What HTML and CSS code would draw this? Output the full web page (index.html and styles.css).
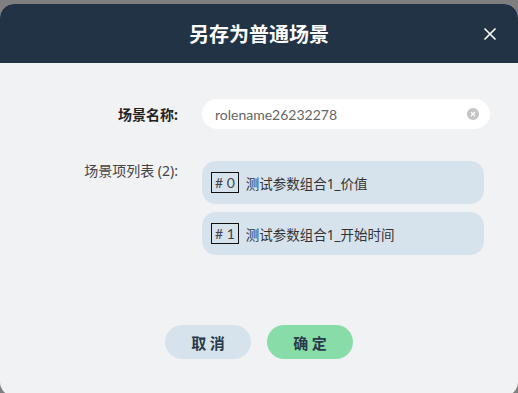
FILE: index.html
```html
<!DOCTYPE html>
<html lang="zh-CN">
<head>
  <meta charset="UTF-8" />
  <title>另存为普通场景</title>
  <link rel="stylesheet" href="styles.css">
</head>
<body>
<div class="dialog">
  <header class="dialog-head">
    <h2>另存为普通场景</h2>
    <button class="close-btn" aria-label="关闭">
      <svg width="14" height="14" viewBox="0 0 14 14"><path d="M1.5 1.5L12.5 12.5M12.5 1.5L1.5 12.5" stroke="#fff" stroke-width="1.6" fill="none"/></svg>
    </button>
  </header>

  <main class="dialog-body">
    <div class="form-row">
      <label class="form-label strong">场景名称:</label>
      <div class="input-wrap">
        <input type="text" value="rolename26232278">
        <span class="clear-icon">
          <svg width="12" height="12" viewBox="0 0 12 12"><circle cx="6" cy="6" r="6" fill="#c4c4c4"/><path d="M4 4L8 8M8 4L4 8" stroke="#fff" stroke-width="1.3"/></svg>
        </span>
      </div>
    </div>

    <div class="form-row list-row">
      <label class="form-label">场景项列表 (2):</label>
      <div class="item-list">
        <div class="item"><span class="idx"># 0</span>测试参数组合1_价值</div>
        <div class="item"><span class="idx"># 1</span>测试参数组合1_开始时间</div>
      </div>
    </div>
  </main>

  <footer class="dialog-foot">
    <button class="btn btn-cancel">取 消</button>
    <button class="btn btn-ok">确 定</button>
  </footer>
</div>
</body>
</html>
```

FILE: styles.css
```css
:root {
  --navy: #213345;
  --panel: #f1f2f4;
  --pale-blue: #d6e3ed;
  --green: #88dca8;
}
body {
  margin: 0;
  background: #7f7f7f;
  font-family: "Noto Sans", "Noto Sans CJK SC", sans-serif;
  height: 393px;
  overflow: hidden;
}
.dialog {
  margin-top: 4px;
  height: 392px;
  background: var(--panel);
  border-radius: 14px;
  overflow: hidden;
  display: flex;
  flex-direction: column;
}
.dialog-head {
  height: 59px;
  flex-shrink: 0;
  background: var(--navy);
  display: flex;
  align-items: center;
  justify-content: center;
  position: relative;
}
.dialog-head h2 {
  margin: 0;
  color: #fff;
  font-size: 20px;
  font-weight: 700;
}
.close-btn {
  position: absolute;
  right: 21px;
  top: 23px;
  background: none;
  border: none;
  padding: 0;
  width: 14px;
  height: 14px;
  display: flex;
}
.dialog-body {
  padding: 36px 28px 0 0;
  flex-grow: 1;
}
.form-row {
  display: flex;
  gap: 24px;
  align-items: center;
}
.list-row {
  margin-top: 32px;
  align-items: flex-start;
}
.form-label {
  width: 178px;
  text-align: right;
  font-size: 14px;
  color: #444;
  flex-shrink: 0;
}
.form-label.strong {
  font-weight: 700;
  color: #222;
}
.list-row .form-label {
  line-height: 20px;
}
.input-wrap {
  width: 288px;
  height: 30px;
  background: #fff;
  border-radius: 15px;
  display: flex;
  align-items: center;
  padding: 0 11px 0 13px;
  box-sizing: border-box;
}
.input-wrap input {
  flex-grow: 1;
  border: none;
  outline: none;
  background: none;
  font-family: "Lato", sans-serif;
  font-size: 14px;
  color: #666;
  padding: 0;
}
.clear-icon {
  display: flex;
}
.item-list {
  width: 282px;
  display: flex;
  flex-direction: column;
  gap: 8px;
}
.item {
  height: 43px;
  background: var(--pale-blue);
  border-radius: 14px;
  display: flex;
  align-items: center;
  padding-left: 9px;
  font-size: 13.5px;
  color: #333;
}
.idx {
  border: 1px solid #111;
  height: 19px;
  padding: 0 3px;
  margin-right: 7px;
  font-family: "Lato", sans-serif;
  font-size: 14px;
  line-height: 19px;
  color: #444;
}
.dialog-foot {
  display: flex;
  justify-content: center;
  gap: 16px;
  padding-bottom: 37px;
}
.btn {
  width: 86px;
  height: 34px;
  border: none;
  border-radius: 17px;
  font-family: "Noto Sans CJK SC", sans-serif;
  font-size: 15px;
  font-weight: 700;
  color: #2a3a4a;
}
.btn-cancel {
  background: var(--pale-blue);
}
.btn-ok {
  background: var(--green);
}
```
